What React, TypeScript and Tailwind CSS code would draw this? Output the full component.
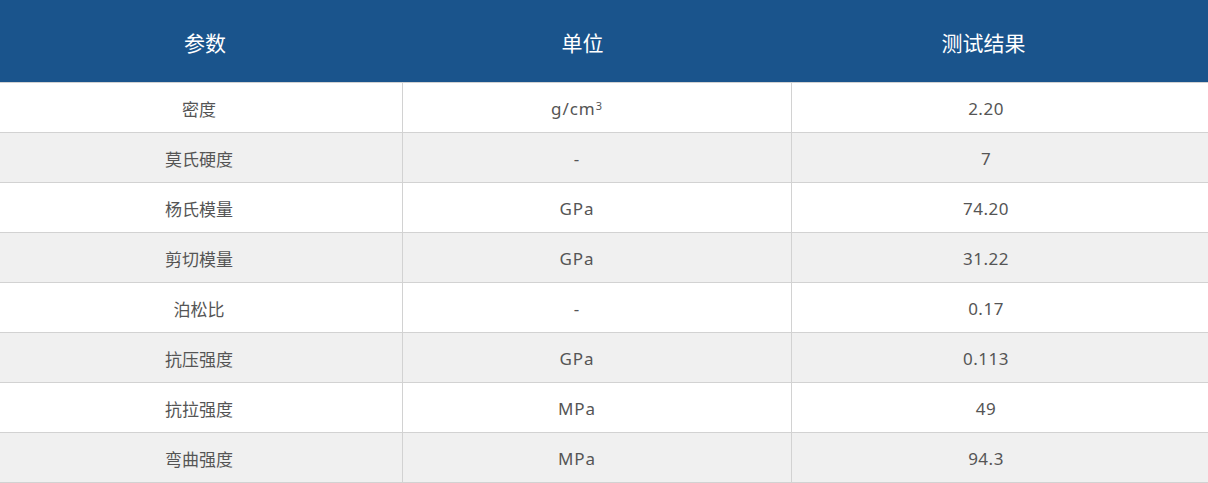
import React from 'react';

const rows = [
  ['密度', 'g/cm', '2.20'],
  ['莫氏硬度', '-', '7'],
  ['杨氏模量', 'GPa', '74.20'],
  ['剪切模量', 'GPa', '31.22'],
  ['泊松比', '-', '0.17'],
  ['抗压强度', 'GPa', '0.113'],
  ['抗拉强度', 'MPa', '49'],
  ['弯曲强度', 'MPa', '94.3'],
];

export default function App() {
  return (
    <div
      className="w-[1208px] bg-white"
      style={{ fontFamily: '"Noto Sans", "Noto Sans CJK SC", sans-serif' }}
    >
      {/* Header */}
      <div className="grid grid-cols-[402px_389px_1fr] h-[82px] pt-[6px] bg-[#1a548c] text-white text-[21px] items-center text-center">
        <div className="pl-[8px]">参数</div>
        <div className="pr-[28px]">单位</div>
        <div className="pr-[32px]">测试结果</div>
      </div>

      {/* Body */}
      <div className="border-t border-[#d2d2d2]">
        {rows.map((r, i) => (
          <div
            key={i}
            className={`grid grid-cols-[402px_389px_1fr] h-[50px] border-b border-[#d2d2d2] text-[17px] text-[#555555] text-center ${
              i % 2 === 1 ? 'bg-[#f0f0f0]' : 'bg-white'
            }`}
          >
            <div className="flex items-center justify-center pr-[4px] pt-[4px]">{r[0]}</div>
            <div className="flex items-center justify-center border-l border-[#d2d2d2] pr-[40px] pt-[2px] tracking-[1px]">
              <span>
                {r[1]}
                {i === 0 && <span className="text-[11px] align-[5px]">3</span>}
              </span>
            </div>
            <div className="flex items-center justify-center border-l border-[#d2d2d2] pr-[28px] pt-[2px] tracking-[0.5px]">{r[2]}</div>
          </div>
        ))}
      </div>
    </div>
  );
}
